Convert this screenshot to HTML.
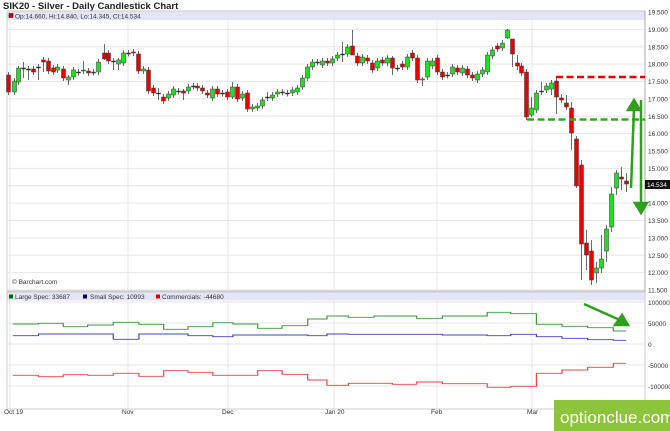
<!DOCTYPE html>
<html><head><meta charset="utf-8"><style>
html,body{margin:0;padding:0;background:#fff;width:670px;height:431px;overflow:hidden;font-family:"Liberation Sans",sans-serif}
svg{position:absolute;left:0;top:0}
</style></head><body>
<svg id="s" width="670" height="431" viewBox="0 0 670 431" font-family="Liberation Sans, sans-serif">
<rect width="670" height="431" fill="#fff"/>
<text x="3" y="9" font-size="9.5" font-weight="bold" fill="#222">SIK20 - Silver - Daily Candlestick Chart</text>
<rect x="7" y="11" width="638" height="280" fill="none" stroke="#ccc"/>
<rect x="7.5" y="12" width="637" height="8" fill="#e4e4f7"/>
<rect x="9" y="13.5" width="4" height="4" fill="#d00" stroke="#000" stroke-width=".5"/>
<text x="15" y="18.5" font-size="6.5" fill="#333">Op:14.660, Hi:14.840, Lo:14.345, Cl:14.534</text>
<g id="grid" stroke="#e6e6e6" stroke-width="1"></g>
<g id="c"></g>
<text x="12" y="284" font-size="6.5" fill="#333">© Barchart.com</text>
<line x1="645" y1="11" x2="645" y2="410" stroke="#aaa"/>
<g id="ax" font-size="6.5" fill="#333"></g>
<rect x="645" y="180" width="25" height="9" fill="#111"/>
<text x="647" y="187" font-size="6.5" fill="#fff">14.534</text>
<line x1="556" y1="77" x2="645" y2="77" stroke="#e00" stroke-width="2.5" stroke-dasharray="7,3.5"/>
<line x1="527" y1="119.5" x2="645" y2="119.5" stroke="#3aa620" stroke-width="2.5" stroke-dasharray="7,3.5"/>
<g stroke="#2ea01e" stroke-width="2.5" fill="#2ea01e">
<line x1="631" y1="188" x2="634" y2="108"/><polygon points="628,110 640,110 634,100"/>
<line x1="641" y1="100" x2="641" y2="205"/><polygon points="635,203 647,203 641,213"/>
</g>
<rect x="7" y="292" width="638" height="117" fill="none" stroke="#ccc"/>
<rect x="7.5" y="292.5" width="637" height="8" fill="#e4e4f7"/>
<rect x="9" y="294.5" width="4" height="4" fill="#060"/><text x="15" y="299" font-size="6.5" fill="#333">Large Spec: 33687</text>
<rect x="83" y="294.5" width="4" height="4" fill="#006"/><text x="90" y="299" font-size="6.5" fill="#333">Small Spec: 10993</text>
<rect x="156" y="294.5" width="4" height="4" fill="#d00"/><text x="162" y="299" font-size="6.5" fill="#333">Commercials: -44680</text>
<g id="low" transform="translate(0,280) scale(0.4274,0.3333)" fill="none" stroke-width="2.8"></g>
<g stroke="#2ea01e" stroke-width="2.5" fill="#2ea01e"><line x1="584" y1="304" x2="622" y2="321"/><polygon points="615,325 628,325 622,315"/></g>
<g font-size="6.5" fill="#333">
<text x="648" y="305">100000</text><text x="648" y="326">50000</text><text x="648" y="347">0</text><text x="648" y="368">-50000</text><text x="648" y="389">-100000</text>
<text x="4" y="414">Oct 19</text><text x="122" y="414">Nov</text><text x="222" y="414">Dec</text><text x="325" y="414">Jan 20</text><text x="431" y="414">Feb</text><text x="527" y="414">Mar</text>
</g>
<rect x="554" y="400" width="116" height="31" fill="#8cc43c"/>
<text x="560" y="423" font-size="17" fill="#fff">optionclue.com</text>
</svg>
<script>
var s='',g='',a='',l='';
function Y(p){return 12+(19.5-p)*34.75;}
for(var p=11.5;p<=19.51;p+=0.5){var y=Y(p);g+='<line x1="7" x2="645" y1="'+y+'" y2="'+y+'"/>';a+='<text x="648" y="'+(y+2.5)+'">'+p.toFixed(3)+'</text>';}
[10,128,228,334,437,532].forEach(function(x){g+='<line x1="'+x+'" x2="'+x+'" y1="20" y2="291"/><line x1="'+x+'" x2="'+x+'" y1="301" y2="409"/>';});
[302,323,344,365,386].forEach(function(y){g+='<line x1="7" x2="645" y1="'+y+'" y2="'+y+'"/>';});
document.getElementById('grid').innerHTML=g;document.getElementById('ax').innerHTML=a;
var C=[[8,75,92,'r'],[14,81,92,'g'],[18,68,82,'g',66],[23,68,68.5,'d',62,78],[28,69,69.5,'d',66,80],[33,69,72,'r'],[38,67,67.5,'d',64,80],[43,60,62,'r',57,72],[48,61,71,'r'],[53,68,72,'r'],[57,67,70,'g'],[63,69,78,'r'],[68,77,80,'g',75,85],[73,70,77,'g'],[78,72,72.5,'d'],[83,70,71,'g',61,74],[88,71,73,'r'],[93,72,72.5,'d'],[98,62,72,'g'],[104,53,59,'r',44,60],[108,53,61,'r'],[113,61,61.5,'d',58,70],[118,60,64,'g',58,70],[123,53,63,'g'],[128,53,53.5,'d'],[133,52,53,'r'],[138,54,71,'r'],[143,69,71,'g'],[148,70,91,'r'],[153,88,93,'r'],[158,93,93.5,'d',88,100],[163,97,101,'r'],[168,94,98,'g'],[173,89,95,'g'],[178,91,91.5,'d'],[183,91,93,'r',89,100],[188,87,91,'g'],[193,86,86.5,'d'],[197,86,88,'r'],[202,88,91,'r'],[207,93,95,'r'],[212,89,98,'g'],[217,89,94,'r'],[222,93,93.5,'d'],[227,92,97,'r'],[232,87,97,'g',82,99],[237,87,99,'r'],[242,94,98,'g'],[247,93,109,'r'],[252,107,109,'g'],[257,106,108,'g'],[262,100,106,'g'],[267,97,97.5,'d',92,101],[272,95,98,'g'],[277,92,94,'g'],[282,92,92.5,'d'],[287,93,93.5,'d'],[292,90,93,'g'],[297,88,92,'g'],[302,78,87,'g'],[307,67,78,'g'],[312,62,67,'g'],[317,62,62.5,'d'],[322,61,65,'g'],[327,61,63,'r'],[332,59,63,'g'],[337,55,58,'g'],[342,54,54.5,'d',42,62],[347,47,54,'g'],[352,46,55,'r',30,55],[357,56,63,'r'],[362,57,63,'g'],[367,58,61,'r'],[372,63,70,'r'],[377,61,68,'g'],[382,60,63,'r'],[387,58,63,'g'],[392,58,68,'r',56,75],[397,68,68.5,'d'],[402,64,67,'r'],[407,57,67,'g'],[412,53,58,'r'],[417,58,80,'r'],[422,79,80,'g',77,86],[427,61,77,'g'],[432,61,66,'g'],[437,58,72,'r'],[442,72,77,'r'],[447,75,75.5,'d'],[452,67,74,'g'],[457,68,72,'r'],[462,68,73,'g'],[467,69,75,'r'],[472,75,78,'r'],[477,74,80,'g'],[482,70,74,'g'],[487,55,72,'g'],[492,50,56,'g'],[497,46,49,'r',43,52],[502,43,48,'g'],[507,30,38,'g',29,39],[512,39,54,'r',39,67],[517,63,66,'r',55,70],[521,66,73,'r'],[526,72,117,'r'],[531,108,115,'g',97,117],[536,93,110,'g'],[541,91,91.5,'d',82,95],[546,86,90,'g'],[551,83,89,'g',80,95],[556,81,97,'r',77,114],[561,98,100,'r',94,103],[566,103,107,'r',95,110],[571,108,133,'r',102,150],[576,139,186,'r',136,188],[581,165,244,'r',160,280],[586,243,255,'r',230,270],[591,251,280,'r',240,285],[596,268,273,'g',262,283],[601,259,268,'g',235,273],[606,229,251,'g',225,262],[611,194,227,'g',187,232],[616,173,188,'g',170,195],[621,177,179,'r',167,190],[626,181,184,'r',173,192]];
C.forEach(function(c){var x=c[0],t=c[1],b=c[2],wt=c[4]||t-3,wb=c[5]||b+3;
s+='<line x1="'+(x+0.5)+'" x2="'+(x+0.5)+'" y1="'+wt+'" y2="'+wb+'" stroke="#444" stroke-width="0.8"/>';
var f=c[3]=='r'?'#e00':(c[3]=='g'?'#1ee01e':'#333');
s+='<rect x="'+(x-1.5)+'" y="'+t+'" width="4" height="'+Math.max(1,b-t)+'" fill="'+f+'" stroke="#333" stroke-width="0.5"/>';});
document.getElementById('c').innerHTML=s;
function step(arr,col){var d='';arr.forEach(function(v,i){d+=(i?'L':'M')+v[0]+' '+v[2]+'L'+v[1]+' '+v[2];});return '<path d="'+d+'" stroke="'+col+'"/>';}
var G=[[30,90,132],[90,148,130],[148,205,140],[205,265,135],[265,325,127],[325,383,133],[383,440,148],[440,498,140],[498,545,128],[545,603,132],[603,660,145],[660,720,137],[720,765,117],[765,815,108],[815,875,112],[875,975,108],[975,1035,115],[1035,1140,108],[1140,1195,97],[1195,1255,101],[1255,1315,133],[1315,1375,139],[1375,1435,143],[1435,1465,153]];
var B=[[30,90,167],[90,265,162],[265,325,178],[325,440,162],[440,498,167],[498,545,170],[545,720,165],[720,765,167],[765,815,162],[815,1035,163],[1035,1140,165],[1140,1195,167],[1195,1255,163],[1255,1315,170],[1315,1375,175],[1375,1435,179],[1435,1465,181]];
var R=[[30,90,286],[90,148,290],[148,205,284],[205,265,286],[265,325,280],[325,383,289],[383,440,272],[440,498,277],[498,603,286],[603,660,272],[660,720,283],[720,765,300],[765,815,316],[815,918,310],[918,975,313],[975,1035,306],[1035,1140,311],[1140,1195,322],[1195,1255,319],[1255,1315,280],[1315,1375,270],[1375,1435,262],[1435,1465,250]];
l=step(G,'#3c9a3c')+step(B,'#4040c8')+step(R,'#f04040');
document.getElementById('low').innerHTML=l;
</script>
</body></html>
